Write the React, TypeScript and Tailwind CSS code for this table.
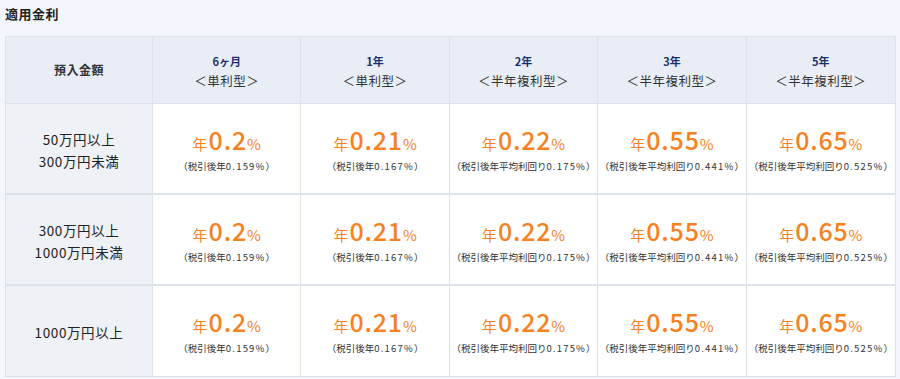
import React from "react";

const terms = [
  { t: "6ヶ月", k: "＜単利型＞" },
  { t: "1年", k: "＜単利型＞" },
  { t: "2年", k: "＜半年複利型＞" },
  { t: "3年", k: "＜半年複利型＞" },
  { t: "5年", k: "＜半年複利型＞" },
];

const rates = [
  { r: "0.2", p: "（税引後年", n: "0.159%" },
  { r: "0.21", p: "（税引後年", n: "0.167%" },
  { r: "0.22", p: "（税引後年平均利回り", n: "0.175%" },
  { r: "0.55", p: "（税引後年平均利回り", n: "0.441%" },
  { r: "0.65", p: "（税引後年平均利回り", n: "0.525%" },
];

const rows = [["50万円以上", "300万円未満"], ["300万円以上", "1000万円未満"], ["1000万円以上"]];

export default function App() {
  return (
    <div
      className="w-[900px] h-[379px] bg-[#f3f6fc] overflow-hidden"
      style={{ fontFamily: '"Noto Sans CJK JP", "Noto Sans", sans-serif' }}
    >
      <div className="pl-[5px] pt-[5px] h-[36px] text-[13px] font-bold text-[#222] leading-[18px] tracking-[0.5px]">適用金利</div>
      <div className="ml-[5px] w-[891px] border border-[#dce2ea] grid grid-cols-[147px_repeat(5,minmax(0,1fr))] bg-white">
        <div className="h-[67px] bg-[#e9eef6] border-r border-b border-[#dce2ea] flex items-center justify-center text-[12px] font-bold text-[#333] tracking-[0.5px]">
          預入金額
        </div>
        {terms.map((x, i) => (
          <div
            key={i}
            className={`h-[67px] pt-[2px] bg-[#e9eef6] border-b border-[#dce2ea] flex flex-col items-center justify-center ${i < 4 ? "border-r" : ""}`}
          >
            <div className="text-[11px] font-bold text-[#1c2f6b] leading-[19px]">{x.t}</div>
            <div className="text-[12.5px] text-[#333] leading-[20px] tracking-[0.5px]">{x.k}</div>
          </div>
        ))}
        {rows.map((lab, ri) => (
          <React.Fragment key={ri}>
            <div
              className={`${ri < 2 ? "h-[91px] border-b-2" : "h-[90px]"} pt-[2px] bg-[#eef1f6] border-r border-[#dce2ea] flex flex-col items-center justify-center text-[13.5px] text-[#222] leading-[22px] tracking-[0.6px]`}
            >
              {lab.map((l, j) => (
                <div key={j}>{l}</div>
              ))}
            </div>
            {rates.map((x, i) => (
              <div
                key={i}
                className={`${ri < 2 ? "h-[91px] border-b-2" : "h-[90px]"} bg-white border-[#dce2ea] flex flex-col items-center justify-center ${i < 4 ? "border-r" : ""}`}
              >
                <div className="flex items-baseline text-[#f5821f] leading-[28px]">
                  <span className="text-[15px] mr-[1px]">年</span>
                  <span className="text-[25px] font-medium tracking-[0.8px]">{x.r}</span>
                  <span className="text-[15px]">%</span>
                </div>
                <div className="mt-[1px] text-[9.5px] text-[#333] leading-[14px] whitespace-nowrap">
                  {x.p}
                  <span className="tracking-[1.2px]">{x.n}</span>）
                </div>
              </div>
            ))}
          </React.Fragment>
        ))}
      </div>
    </div>
  );
}
